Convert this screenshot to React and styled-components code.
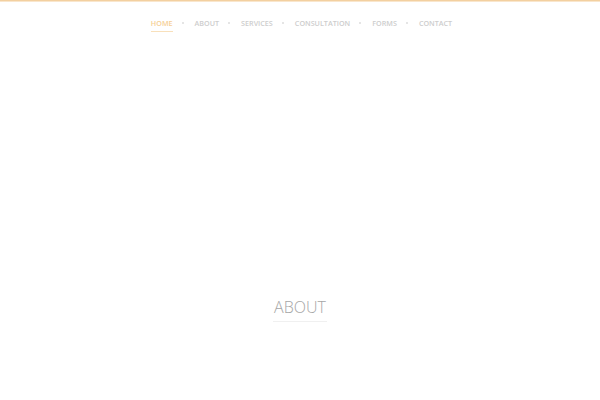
import React from 'react';
import styled, { createGlobalStyle } from 'styled-components';

const GlobalStyle = createGlobalStyle`
  html, body {
    margin: 0;
    padding: 0;
    background: #fff;
    font-family: "Open Sans", "Liberation Sans", sans-serif;
  }
`;

const Page = styled.div`
  width: 600px;
  height: 400px;
  border-top: 1px solid #f3d0a0;
  box-shadow: inset 0 1px 0 #f9e6cc;
  box-sizing: border-box;
  display: flex;
  flex-direction: column;
`;

const Nav = styled.nav`
  display: flex;
  justify-content: center;
  align-items: center;
  padding: 15px 0 0 0;
  height: 17px;
  margin-left: 3px;
`;

const NavItem = styled.a`
  font-size: 7.2px;
  font-weight: 600;
  text-transform: uppercase;
  color: ${p => (p.active ? '#f6cf95' : '#cdcdcd')};
  text-decoration: none;
  padding-bottom: 3px;
  border-bottom: 1px solid ${p => (p.active ? '#f8e0bb' : 'transparent')};
  line-height: 10px;
`;

const Dot = styled.span`
  width: 2px;
  height: 2px;
  border-radius: 50%;
  background: #dcdcdc;
  margin: 0 11px 3px 9px;
`;

const Section = styled.section`
  margin-top: 263px;
  display: flex;
  flex-direction: column;
  align-items: center;
`;

const Title = styled.h2`
  margin: 0;
  font-size: 16px;
  font-weight: 300;
  text-transform: uppercase;
  color: #a6a6a6;
  line-height: 22px;
  padding: 0 1px 3px;
  border-bottom: 1px solid #f0f0f0;
`;

const items = ['Home', 'About', 'Services', 'Consultation', 'Forms', 'Contact'];

export default function App() {
  return (
    <>
      <GlobalStyle />
      <Page>
        <Nav>
          {items.map((item, i) => (
            <React.Fragment key={item}>
              {i > 0 && <Dot />}
              <NavItem active={i === 0}>{item}</NavItem>
            </React.Fragment>
          ))}
        </Nav>
        <Section>
          <Title>About</Title>
        </Section>
      </Page>
    </>
  );
}
